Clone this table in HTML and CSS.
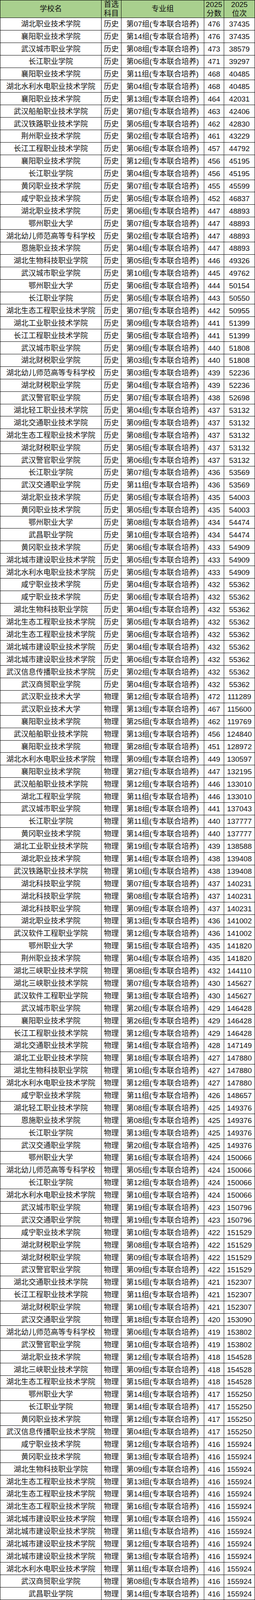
FILE: index.html
```html
<!DOCTYPE html>
<html lang="zh-CN">
<head>
<meta charset="utf-8">
<title>专本联合培养录取分数</title>
<link rel="stylesheet" href="styles.css">
</head>
<body>
<div class="score-table">
<div class="row head"><div class="cell">学校名</div><div class="cell">首选<br>科目</div><div class="cell">专业组</div><div class="cell">2025<br>分数</div><div class="cell">2025<br>位次</div></div>
<div class="row"><div class="cell">湖北职业技术学院</div><div class="cell">历史</div><div class="cell">第07组(专本联合培养)</div><div class="cell">476</div><div class="cell">37435</div></div>
<div class="row"><div class="cell">襄阳职业技术学院</div><div class="cell">历史</div><div class="cell">第14组(专本联合培养)</div><div class="cell">476</div><div class="cell">37435</div></div>
<div class="row"><div class="cell">武汉城市职业学院</div><div class="cell">历史</div><div class="cell">第08组(专本联合培养)</div><div class="cell">473</div><div class="cell">38579</div></div>
<div class="row"><div class="cell">长江职业学院</div><div class="cell">历史</div><div class="cell">第06组(专本联合培养)</div><div class="cell">471</div><div class="cell">39297</div></div>
<div class="row"><div class="cell">襄阳职业技术学院</div><div class="cell">历史</div><div class="cell">第11组(专本联合培养)</div><div class="cell">468</div><div class="cell">40485</div></div>
<div class="row"><div class="cell">湖北水利水电职业技术学院</div><div class="cell">历史</div><div class="cell">第04组(专本联合培养)</div><div class="cell">468</div><div class="cell">40485</div></div>
<div class="row"><div class="cell">襄阳职业技术学院</div><div class="cell">历史</div><div class="cell">第13组(专本联合培养)</div><div class="cell">464</div><div class="cell">42031</div></div>
<div class="row"><div class="cell">武汉船舶职业技术学院</div><div class="cell">历史</div><div class="cell">第07组(专本联合培养)</div><div class="cell">463</div><div class="cell">42406</div></div>
<div class="row"><div class="cell">武汉铁路职业技术学院</div><div class="cell">历史</div><div class="cell">第05组(专本联合培养)</div><div class="cell">462</div><div class="cell">42830</div></div>
<div class="row"><div class="cell">荆州职业技术学院</div><div class="cell">历史</div><div class="cell">第02组(专本联合培养)</div><div class="cell">461</div><div class="cell">43229</div></div>
<div class="row"><div class="cell">长江工程职业技术学院</div><div class="cell">历史</div><div class="cell">第06组(专本联合培养)</div><div class="cell">457</div><div class="cell">44792</div></div>
<div class="row"><div class="cell">襄阳职业技术学院</div><div class="cell">历史</div><div class="cell">第12组(专本联合培养)</div><div class="cell">456</div><div class="cell">45195</div></div>
<div class="row"><div class="cell">长江职业学院</div><div class="cell">历史</div><div class="cell">第04组(专本联合培养)</div><div class="cell">456</div><div class="cell">45195</div></div>
<div class="row"><div class="cell">黄冈职业技术学院</div><div class="cell">历史</div><div class="cell">第07组(专本联合培养)</div><div class="cell">455</div><div class="cell">45599</div></div>
<div class="row"><div class="cell">咸宁职业技术学院</div><div class="cell">历史</div><div class="cell">第05组(专本联合培养)</div><div class="cell">452</div><div class="cell">46837</div></div>
<div class="row"><div class="cell">湖北职业技术学院</div><div class="cell">历史</div><div class="cell">第06组(专本联合培养)</div><div class="cell">447</div><div class="cell">48893</div></div>
<div class="row"><div class="cell">鄂州职业大学</div><div class="cell">历史</div><div class="cell">第07组(专本联合培养)</div><div class="cell">447</div><div class="cell">48893</div></div>
<div class="row"><div class="cell">湖北幼儿师范高等专科学校</div><div class="cell">历史</div><div class="cell">第02组(专本联合培养)</div><div class="cell">447</div><div class="cell">48893</div></div>
<div class="row"><div class="cell">恩施职业技术学院</div><div class="cell">历史</div><div class="cell">第04组(专本联合培养)</div><div class="cell">447</div><div class="cell">48893</div></div>
<div class="row"><div class="cell">湖北生物科技职业学院</div><div class="cell">历史</div><div class="cell">第05组(专本联合培养)</div><div class="cell">446</div><div class="cell">49326</div></div>
<div class="row"><div class="cell">武汉城市职业学院</div><div class="cell">历史</div><div class="cell">第10组(专本联合培养)</div><div class="cell">445</div><div class="cell">49762</div></div>
<div class="row"><div class="cell">鄂州职业大学</div><div class="cell">历史</div><div class="cell">第06组(专本联合培养)</div><div class="cell">444</div><div class="cell">50154</div></div>
<div class="row"><div class="cell">长江职业学院</div><div class="cell">历史</div><div class="cell">第05组(专本联合培养)</div><div class="cell">443</div><div class="cell">50550</div></div>
<div class="row"><div class="cell">湖北生态工程职业技术学院</div><div class="cell">历史</div><div class="cell">第07组(专本联合培养)</div><div class="cell">442</div><div class="cell">50955</div></div>
<div class="row"><div class="cell">湖北工业职业技术学院</div><div class="cell">历史</div><div class="cell">第09组(专本联合培养)</div><div class="cell">441</div><div class="cell">51399</div></div>
<div class="row"><div class="cell">长江工程职业技术学院</div><div class="cell">历史</div><div class="cell">第05组(专本联合培养)</div><div class="cell">441</div><div class="cell">51399</div></div>
<div class="row"><div class="cell">武汉城市职业学院</div><div class="cell">历史</div><div class="cell">第09组(专本联合培养)</div><div class="cell">440</div><div class="cell">51808</div></div>
<div class="row"><div class="cell">湖北财税职业学院</div><div class="cell">历史</div><div class="cell">第03组(专本联合培养)</div><div class="cell">440</div><div class="cell">51808</div></div>
<div class="row"><div class="cell">湖北幼儿师范高等专科学校</div><div class="cell">历史</div><div class="cell">第03组(专本联合培养)</div><div class="cell">439</div><div class="cell">52236</div></div>
<div class="row"><div class="cell">湖北财税职业学院</div><div class="cell">历史</div><div class="cell">第04组(专本联合培养)</div><div class="cell">439</div><div class="cell">52236</div></div>
<div class="row"><div class="cell">武汉警官职业学院</div><div class="cell">历史</div><div class="cell">第07组(专本联合培养)</div><div class="cell">438</div><div class="cell">52698</div></div>
<div class="row"><div class="cell">湖北轻工职业技术学院</div><div class="cell">历史</div><div class="cell">第04组(专本联合培养)</div><div class="cell">437</div><div class="cell">53132</div></div>
<div class="row"><div class="cell">湖北交通职业技术学院</div><div class="cell">历史</div><div class="cell">第09组(专本联合培养)</div><div class="cell">437</div><div class="cell">53132</div></div>
<div class="row"><div class="cell">湖北生态工程职业技术学院</div><div class="cell">历史</div><div class="cell">第08组(专本联合培养)</div><div class="cell">437</div><div class="cell">53132</div></div>
<div class="row"><div class="cell">湖北财税职业学院</div><div class="cell">历史</div><div class="cell">第05组(专本联合培养)</div><div class="cell">437</div><div class="cell">53132</div></div>
<div class="row"><div class="cell">武汉警官职业学院</div><div class="cell">历史</div><div class="cell">第06组(专本联合培养)</div><div class="cell">437</div><div class="cell">53132</div></div>
<div class="row"><div class="cell">长江职业学院</div><div class="cell">历史</div><div class="cell">第07组(专本联合培养)</div><div class="cell">436</div><div class="cell">53569</div></div>
<div class="row"><div class="cell">武汉交通职业学院</div><div class="cell">历史</div><div class="cell">第11组(专本联合培养)</div><div class="cell">436</div><div class="cell">53569</div></div>
<div class="row"><div class="cell">湖北职业技术学院</div><div class="cell">历史</div><div class="cell">第05组(专本联合培养)</div><div class="cell">435</div><div class="cell">54003</div></div>
<div class="row"><div class="cell">黄冈职业技术学院</div><div class="cell">历史</div><div class="cell">第05组(专本联合培养)</div><div class="cell">435</div><div class="cell">54003</div></div>
<div class="row"><div class="cell">鄂州职业大学</div><div class="cell">历史</div><div class="cell">第08组(专本联合培养)</div><div class="cell">434</div><div class="cell">54474</div></div>
<div class="row"><div class="cell">武昌职业学院</div><div class="cell">历史</div><div class="cell">第10组(专本联合培养)</div><div class="cell">434</div><div class="cell">54474</div></div>
<div class="row"><div class="cell">黄冈职业技术学院</div><div class="cell">历史</div><div class="cell">第06组(专本联合培养)</div><div class="cell">433</div><div class="cell">54909</div></div>
<div class="row"><div class="cell">湖北城市建设职业技术学院</div><div class="cell">历史</div><div class="cell">第05组(专本联合培养)</div><div class="cell">433</div><div class="cell">54909</div></div>
<div class="row"><div class="cell">湖北水利水电职业技术学院</div><div class="cell">历史</div><div class="cell">第05组(专本联合培养)</div><div class="cell">433</div><div class="cell">54909</div></div>
<div class="row"><div class="cell">咸宁职业技术学院</div><div class="cell">历史</div><div class="cell">第04组(专本联合培养)</div><div class="cell">432</div><div class="cell">55362</div></div>
<div class="row"><div class="cell">咸宁职业技术学院</div><div class="cell">历史</div><div class="cell">第06组(专本联合培养)</div><div class="cell">432</div><div class="cell">55362</div></div>
<div class="row"><div class="cell">湖北生物科技职业学院</div><div class="cell">历史</div><div class="cell">第04组(专本联合培养)</div><div class="cell">432</div><div class="cell">55362</div></div>
<div class="row"><div class="cell">湖北生态工程职业技术学院</div><div class="cell">历史</div><div class="cell">第05组(专本联合培养)</div><div class="cell">432</div><div class="cell">55362</div></div>
<div class="row"><div class="cell">湖北生态工程职业技术学院</div><div class="cell">历史</div><div class="cell">第06组(专本联合培养)</div><div class="cell">432</div><div class="cell">55362</div></div>
<div class="row"><div class="cell">湖北城市建设职业技术学院</div><div class="cell">历史</div><div class="cell">第04组(专本联合培养)</div><div class="cell">432</div><div class="cell">55362</div></div>
<div class="row"><div class="cell">湖北城市建设职业技术学院</div><div class="cell">历史</div><div class="cell">第06组(专本联合培养)</div><div class="cell">432</div><div class="cell">55362</div></div>
<div class="row"><div class="cell">武汉信息传播职业技术学院</div><div class="cell">历史</div><div class="cell">第02组(专本联合培养)</div><div class="cell">432</div><div class="cell">55362</div></div>
<div class="row"><div class="cell">武汉商贸职业学院</div><div class="cell">历史</div><div class="cell">第04组(专本联合培养)</div><div class="cell">432</div><div class="cell">55362</div></div>
<div class="row"><div class="cell">武汉职业技术大学</div><div class="cell">物理</div><div class="cell">第12组(专本联合培养)</div><div class="cell">472</div><div class="cell">111289</div></div>
<div class="row"><div class="cell">武汉职业技术大学</div><div class="cell">物理</div><div class="cell">第13组(专本联合培养)</div><div class="cell">467</div><div class="cell">115600</div></div>
<div class="row"><div class="cell">襄阳职业技术学院</div><div class="cell">物理</div><div class="cell">第25组(专本联合培养)</div><div class="cell">462</div><div class="cell">119769</div></div>
<div class="row"><div class="cell">武汉船舶职业技术学院</div><div class="cell">物理</div><div class="cell">第13组(专本联合培养)</div><div class="cell">456</div><div class="cell">124840</div></div>
<div class="row"><div class="cell">襄阳职业技术学院</div><div class="cell">物理</div><div class="cell">第28组(专本联合培养)</div><div class="cell">451</div><div class="cell">128972</div></div>
<div class="row"><div class="cell">湖北水利水电职业技术学院</div><div class="cell">物理</div><div class="cell">第09组(专本联合培养)</div><div class="cell">449</div><div class="cell">130597</div></div>
<div class="row"><div class="cell">襄阳职业技术学院</div><div class="cell">物理</div><div class="cell">第27组(专本联合培养)</div><div class="cell">447</div><div class="cell">132195</div></div>
<div class="row"><div class="cell">武汉船舶职业技术学院</div><div class="cell">物理</div><div class="cell">第12组(专本联合培养)</div><div class="cell">446</div><div class="cell">133010</div></div>
<div class="row"><div class="cell">湖北工程职业学院</div><div class="cell">物理</div><div class="cell">第11组(专本联合培养)</div><div class="cell">446</div><div class="cell">133010</div></div>
<div class="row"><div class="cell">武汉城市职业学院</div><div class="cell">物理</div><div class="cell">第18组(专本联合培养)</div><div class="cell">441</div><div class="cell">137043</div></div>
<div class="row"><div class="cell">长江职业学院</div><div class="cell">物理</div><div class="cell">第11组(专本联合培养)</div><div class="cell">440</div><div class="cell">137777</div></div>
<div class="row"><div class="cell">黄冈职业技术学院</div><div class="cell">物理</div><div class="cell">第14组(专本联合培养)</div><div class="cell">440</div><div class="cell">137777</div></div>
<div class="row"><div class="cell">湖北工业职业技术学院</div><div class="cell">物理</div><div class="cell">第19组(专本联合培养)</div><div class="cell">439</div><div class="cell">138588</div></div>
<div class="row"><div class="cell">湖北职业技术学院</div><div class="cell">物理</div><div class="cell">第14组(专本联合培养)</div><div class="cell">438</div><div class="cell">139408</div></div>
<div class="row"><div class="cell">武汉铁路职业技术学院</div><div class="cell">物理</div><div class="cell">第10组(专本联合培养)</div><div class="cell">438</div><div class="cell">139408</div></div>
<div class="row"><div class="cell">湖北科技职业学院</div><div class="cell">物理</div><div class="cell">第07组(专本联合培养)</div><div class="cell">437</div><div class="cell">140231</div></div>
<div class="row"><div class="cell">湖北科技职业学院</div><div class="cell">物理</div><div class="cell">第08组(专本联合培养)</div><div class="cell">437</div><div class="cell">140231</div></div>
<div class="row"><div class="cell">湖北科技职业学院</div><div class="cell">物理</div><div class="cell">第09组(专本联合培养)</div><div class="cell">437</div><div class="cell">140231</div></div>
<div class="row"><div class="cell">湖北职业技术学院</div><div class="cell">物理</div><div class="cell">第13组(专本联合培养)</div><div class="cell">436</div><div class="cell">141002</div></div>
<div class="row"><div class="cell">武汉软件工程职业学院</div><div class="cell">物理</div><div class="cell">第12组(专本联合培养)</div><div class="cell">436</div><div class="cell">141002</div></div>
<div class="row"><div class="cell">鄂州职业大学</div><div class="cell">物理</div><div class="cell">第15组(专本联合培养)</div><div class="cell">435</div><div class="cell">141820</div></div>
<div class="row"><div class="cell">荆州职业技术学院</div><div class="cell">物理</div><div class="cell">第04组(专本联合培养)</div><div class="cell">435</div><div class="cell">141820</div></div>
<div class="row"><div class="cell">湖北三峡职业技术学院</div><div class="cell">物理</div><div class="cell">第08组(专本联合培养)</div><div class="cell">432</div><div class="cell">144110</div></div>
<div class="row"><div class="cell">湖北三峡职业技术学院</div><div class="cell">物理</div><div class="cell">第07组(专本联合培养)</div><div class="cell">430</div><div class="cell">145627</div></div>
<div class="row"><div class="cell">武汉软件工程职业学院</div><div class="cell">物理</div><div class="cell">第13组(专本联合培养)</div><div class="cell">430</div><div class="cell">145627</div></div>
<div class="row"><div class="cell">武汉城市职业学院</div><div class="cell">物理</div><div class="cell">第20组(专本联合培养)</div><div class="cell">429</div><div class="cell">146428</div></div>
<div class="row"><div class="cell">襄阳职业技术学院</div><div class="cell">物理</div><div class="cell">第26组(专本联合培养)</div><div class="cell">429</div><div class="cell">146428</div></div>
<div class="row"><div class="cell">长江工程职业技术学院</div><div class="cell">物理</div><div class="cell">第12组(专本联合培养)</div><div class="cell">429</div><div class="cell">146428</div></div>
<div class="row"><div class="cell">湖北交通职业技术学院</div><div class="cell">物理</div><div class="cell">第14组(专本联合培养)</div><div class="cell">428</div><div class="cell">147149</div></div>
<div class="row"><div class="cell">湖北工业职业技术学院</div><div class="cell">物理</div><div class="cell">第18组(专本联合培养)</div><div class="cell">427</div><div class="cell">147880</div></div>
<div class="row"><div class="cell">湖北生物科技职业学院</div><div class="cell">物理</div><div class="cell">第10组(专本联合培养)</div><div class="cell">427</div><div class="cell">147880</div></div>
<div class="row"><div class="cell">湖北水利水电职业技术学院</div><div class="cell">物理</div><div class="cell">第12组(专本联合培养)</div><div class="cell">427</div><div class="cell">147880</div></div>
<div class="row"><div class="cell">咸宁职业技术学院</div><div class="cell">物理</div><div class="cell">第11组(专本联合培养)</div><div class="cell">426</div><div class="cell">148657</div></div>
<div class="row"><div class="cell">湖北轻工职业技术学院</div><div class="cell">物理</div><div class="cell">第08组(专本联合培养)</div><div class="cell">425</div><div class="cell">149376</div></div>
<div class="row"><div class="cell">恩施职业技术学院</div><div class="cell">物理</div><div class="cell">第08组(专本联合培养)</div><div class="cell">425</div><div class="cell">149376</div></div>
<div class="row"><div class="cell">长江职业学院</div><div class="cell">物理</div><div class="cell">第13组(专本联合培养)</div><div class="cell">425</div><div class="cell">149376</div></div>
<div class="row"><div class="cell">武汉交通职业学院</div><div class="cell">物理</div><div class="cell">第20组(专本联合培养)</div><div class="cell">425</div><div class="cell">149376</div></div>
<div class="row"><div class="cell">鄂州职业大学</div><div class="cell">物理</div><div class="cell">第16组(专本联合培养)</div><div class="cell">424</div><div class="cell">150066</div></div>
<div class="row"><div class="cell">湖北幼儿师范高等专科学校</div><div class="cell">物理</div><div class="cell">第05组(专本联合培养)</div><div class="cell">424</div><div class="cell">150066</div></div>
<div class="row"><div class="cell">长江职业学院</div><div class="cell">物理</div><div class="cell">第12组(专本联合培养)</div><div class="cell">424</div><div class="cell">150066</div></div>
<div class="row"><div class="cell">湖北水利水电职业技术学院</div><div class="cell">物理</div><div class="cell">第10组(专本联合培养)</div><div class="cell">424</div><div class="cell">150066</div></div>
<div class="row"><div class="cell">武汉城市职业学院</div><div class="cell">物理</div><div class="cell">第19组(专本联合培养)</div><div class="cell">423</div><div class="cell">150796</div></div>
<div class="row"><div class="cell">武汉交通职业学院</div><div class="cell">物理</div><div class="cell">第19组(专本联合培养)</div><div class="cell">423</div><div class="cell">150796</div></div>
<div class="row"><div class="cell">咸宁职业技术学院</div><div class="cell">物理</div><div class="cell">第10组(专本联合培养)</div><div class="cell">422</div><div class="cell">151529</div></div>
<div class="row"><div class="cell">湖北财税职业学院</div><div class="cell">物理</div><div class="cell">第08组(专本联合培养)</div><div class="cell">422</div><div class="cell">151529</div></div>
<div class="row"><div class="cell">湖北财税职业学院</div><div class="cell">物理</div><div class="cell">第09组(专本联合培养)</div><div class="cell">422</div><div class="cell">151529</div></div>
<div class="row"><div class="cell">武汉警官职业学院</div><div class="cell">物理</div><div class="cell">第09组(专本联合培养)</div><div class="cell">422</div><div class="cell">151529</div></div>
<div class="row"><div class="cell">湖北交通职业技术学院</div><div class="cell">物理</div><div class="cell">第15组(专本联合培养)</div><div class="cell">421</div><div class="cell">152307</div></div>
<div class="row"><div class="cell">长江工程职业技术学院</div><div class="cell">物理</div><div class="cell">第11组(专本联合培养)</div><div class="cell">421</div><div class="cell">152307</div></div>
<div class="row"><div class="cell">湖北财税职业学院</div><div class="cell">物理</div><div class="cell">第10组(专本联合培养)</div><div class="cell">421</div><div class="cell">152307</div></div>
<div class="row"><div class="cell">武汉交通职业学院</div><div class="cell">物理</div><div class="cell">第18组(专本联合培养)</div><div class="cell">420</div><div class="cell">153090</div></div>
<div class="row"><div class="cell">湖北幼儿师范高等专科学校</div><div class="cell">物理</div><div class="cell">第06组(专本联合培养)</div><div class="cell">419</div><div class="cell">153802</div></div>
<div class="row"><div class="cell">武汉警官职业学院</div><div class="cell">物理</div><div class="cell">第10组(专本联合培养)</div><div class="cell">419</div><div class="cell">153802</div></div>
<div class="row"><div class="cell">湖北职业技术学院</div><div class="cell">物理</div><div class="cell">第12组(专本联合培养)</div><div class="cell">418</div><div class="cell">154528</div></div>
<div class="row"><div class="cell">湖北三峡职业技术学院</div><div class="cell">物理</div><div class="cell">第09组(专本联合培养)</div><div class="cell">418</div><div class="cell">154528</div></div>
<div class="row"><div class="cell">湖北生态工程职业技术学院</div><div class="cell">物理</div><div class="cell">第15组(专本联合培养)</div><div class="cell">418</div><div class="cell">154528</div></div>
<div class="row"><div class="cell">鄂州职业大学</div><div class="cell">物理</div><div class="cell">第14组(专本联合培养)</div><div class="cell">417</div><div class="cell">155250</div></div>
<div class="row"><div class="cell">长江职业学院</div><div class="cell">物理</div><div class="cell">第14组(专本联合培养)</div><div class="cell">417</div><div class="cell">155250</div></div>
<div class="row"><div class="cell">黄冈职业技术学院</div><div class="cell">物理</div><div class="cell">第12组(专本联合培养)</div><div class="cell">417</div><div class="cell">155250</div></div>
<div class="row"><div class="cell">武汉信息传播职业技术学院</div><div class="cell">物理</div><div class="cell">第04组(专本联合培养)</div><div class="cell">417</div><div class="cell">155250</div></div>
<div class="row"><div class="cell">咸宁职业技术学院</div><div class="cell">物理</div><div class="cell">第12组(专本联合培养)</div><div class="cell">416</div><div class="cell">155924</div></div>
<div class="row"><div class="cell">黄冈职业技术学院</div><div class="cell">物理</div><div class="cell">第13组(专本联合培养)</div><div class="cell">416</div><div class="cell">155924</div></div>
<div class="row"><div class="cell">湖北生物科技职业学院</div><div class="cell">物理</div><div class="cell">第09组(专本联合培养)</div><div class="cell">416</div><div class="cell">155924</div></div>
<div class="row"><div class="cell">湖北生态工程职业技术学院</div><div class="cell">物理</div><div class="cell">第13组(专本联合培养)</div><div class="cell">416</div><div class="cell">155924</div></div>
<div class="row"><div class="cell">湖北生态工程职业技术学院</div><div class="cell">物理</div><div class="cell">第14组(专本联合培养)</div><div class="cell">416</div><div class="cell">155924</div></div>
<div class="row"><div class="cell">湖北生态工程职业技术学院</div><div class="cell">物理</div><div class="cell">第16组(专本联合培养)</div><div class="cell">416</div><div class="cell">155924</div></div>
<div class="row"><div class="cell">湖北城市建设职业技术学院</div><div class="cell">物理</div><div class="cell">第10组(专本联合培养)</div><div class="cell">416</div><div class="cell">155924</div></div>
<div class="row"><div class="cell">湖北城市建设职业技术学院</div><div class="cell">物理</div><div class="cell">第11组(专本联合培养)</div><div class="cell">416</div><div class="cell">155924</div></div>
<div class="row"><div class="cell">湖北城市建设职业技术学院</div><div class="cell">物理</div><div class="cell">第12组(专本联合培养)</div><div class="cell">416</div><div class="cell">155924</div></div>
<div class="row"><div class="cell">湖北城市建设职业技术学院</div><div class="cell">物理</div><div class="cell">第13组(专本联合培养)</div><div class="cell">416</div><div class="cell">155924</div></div>
<div class="row"><div class="cell">湖北水利水电职业技术学院</div><div class="cell">物理</div><div class="cell">第11组(专本联合培养)</div><div class="cell">416</div><div class="cell">155924</div></div>
<div class="row"><div class="cell">武汉商贸职业学院</div><div class="cell">物理</div><div class="cell">第08组(专本联合培养)</div><div class="cell">416</div><div class="cell">155924</div></div>
<div class="row"><div class="cell">武昌职业学院</div><div class="cell">物理</div><div class="cell">第14组(专本联合培养)</div><div class="cell">416</div><div class="cell">155924</div></div>
</div>
</body>
</html>
```
FILE: styles.css
```css
html, body {
  margin: 0;
  padding: 0;
  background: #ffffff;
}

.score-table {
  width: 653px;
  height: 100vh;
  box-sizing: border-box;
  display: grid;
  grid-template-columns: 258px 50px 211px 50px 78px;
  grid-template-rows: 47fr repeat(127, 33fr);
  gap: 1px;
  padding: 1px;
  background: #000000;
  overflow: hidden;
  font-family: "Liberation Sans", "Noto Sans CJK SC", sans-serif;
  font-size: 19px;
  line-height: 20px;
  color: #111111;
}

.row {
  display: contents;
}

.cell {
  display: flex;
  align-items: center;
  justify-content: center;
  min-height: 0;
  text-align: center;
  white-space: nowrap;
  overflow: hidden;
  background: #ffffff;
  padding-top: 2px;
  box-sizing: border-box;
}

.head .cell {
  background: #a9d08e;
  line-height: 23px;
  padding-top: 0;
}
```
